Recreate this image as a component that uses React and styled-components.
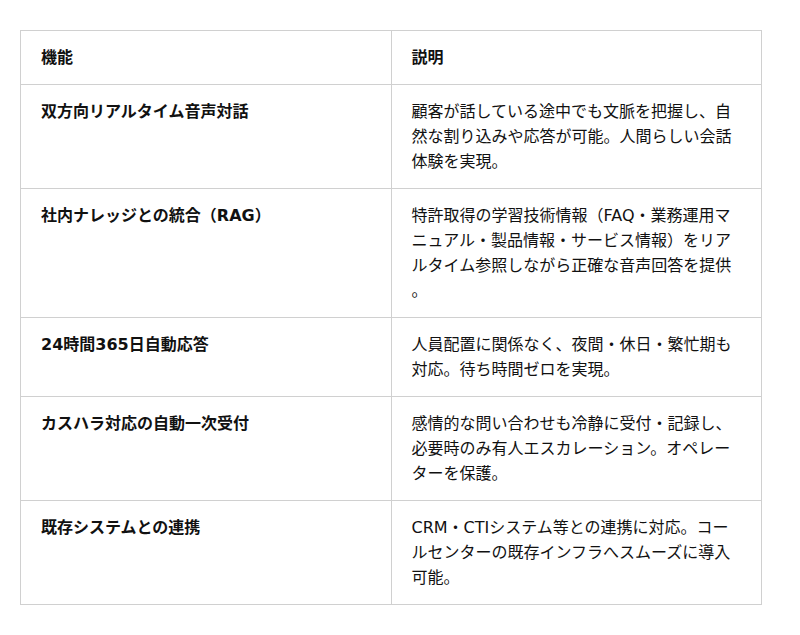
import React from 'react'
import styled, { createGlobalStyle } from 'styled-components'

// Data
const rows = [
  ['双方向リアルタイム音声対話', '顧客が話している途中でも文脈を把握し、自然な割り込みや応答が可能。人間らしい会話体験を実現。'],
  ['社内ナレッジとの統合（RAG）', '特許取得の学習技術情報（FAQ・業務運用マニュアル・製品情報・サービス情報）をリアルタイム参照しながら正確な音声回答を提供。'],
  ['24時間365日自動応答', '人員配置に関係なく、夜間・休日・繁忙期も対応。待ち時間ゼロを実現。'],
  ['カスハラ対応の自動一次受付', '感情的な問い合わせも冷静に受付・記録し、必要時のみ有人エスカレーション。オペレーターを保護。'],
  ['既存システムとの連携', 'CRM・CTIシステム等との連携に対応。コールセンターの既存インフラへスムーズに導入可能。'],
]

// App
const App = () => (
  <>
    <GlobalStyle />
    <Page>
      <Table>
        <thead>
          <tr>
            <Head>機能</Head>
            <Head>説明</Head>
          </tr>
        </thead>
        <tbody>
          {rows.map(([name, desc]) => (
            <tr key={name}>
              <Cell bold>{name}</Cell>
              <Cell>{desc}</Cell>
            </tr>
          ))}
        </tbody>
      </Table>
    </Page>
  </>
)

// Styles
const GlobalStyle = createGlobalStyle`
  body {
    margin: 0;
    background: #fff;
    font-family: "DejaVu Sans", "Noto Sans CJK JP", sans-serif;
    color: #111;
  }
`

const Page = styled.div`
  padding: 30px 20px;
`

const Table = styled.table`
  width: 742px;
  border-collapse: collapse;
  table-layout: fixed;
  font-size: 16px;
  line-height: 25px;
`

const Head = styled.th`
  width: 50%;
  text-align: left;
  font-weight: 700;
  padding: 14px 20px;
  border: 1px solid #d0d0d0;
`

const Cell = styled.td`
  vertical-align: top;
  text-align: left;
  font-weight: ${p => (p.bold ? 700 : 400)};
  padding: 14px 20px;
  border: 1px solid #d0d0d0;
  line-break: anywhere;
`

export default App
